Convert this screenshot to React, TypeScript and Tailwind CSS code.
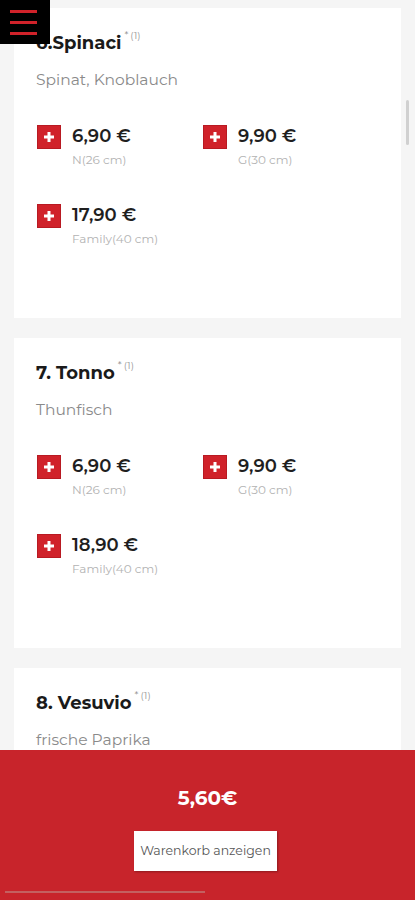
import React from "react";

const font = { fontFamily: '"Montserrat", "Inter", "Open Sans", sans-serif' };

type Price = { value: string; label: string };
type Item = { title: string; desc: string; prices: Price[] };

const items: Item[] = [
  {
    title: "6.Spinaci",
    desc: "Spinat, Knoblauch",
    prices: [
      { value: "6,90 €", label: "N(26 cm)" },
      { value: "9,90 €", label: "G(30 cm)" },
      { value: "17,90 €", label: "Family(40 cm)" },
    ],
  },
  {
    title: "7. Tonno",
    desc: "Thunfisch",
    prices: [
      { value: "6,90 €", label: "N(26 cm)" },
      { value: "9,90 €", label: "G(30 cm)" },
      { value: "18,90 €", label: "Family(40 cm)" },
    ],
  },
  {
    title: "8. Vesuvio",
    desc: "frische Paprika",
    prices: [
      { value: "6,90 €", label: "N(26 cm)" },
      { value: "9,90 €", label: "G(30 cm)" },
      { value: "18,90 €", label: "Family(40 cm)" },
    ],
  },
];

function PlusIcon() {
  return (
    <div className="w-6 h-6 bg-[#d0222a] flex items-center justify-center shrink-0 border border-[#b81a22]">
      <svg width="12" height="12" viewBox="0 0 12 12">
        <rect x="4.5" y="1" width="3" height="10" fill="#fff" />
        <rect x="1" y="4.5" width="10" height="3" fill="#fff" />
      </svg>
    </div>
  );
}

function Card({ item }: { item: Item }) {
  return (
    <div className="bg-white h-[310px] shrink-0 pl-[22px] pt-[23px]">
      <div className="flex items-start h-6">
        <span className="text-[18px] leading-6 font-bold text-[#1a1a1a]">{item.title}</span>
        <span className="text-[10px] leading-none text-[#888] ml-[3px] -mt-[1px]">*</span>
        <span className="text-[10px] leading-none text-[#999] ml-[2px] mt-0">(1)</span>
      </div>
      <div className="mt-[15px] text-[15.5px] leading-5 text-[#8a8a8a]">{item.desc}</div>
      <div className="mt-[35px] grid grid-cols-[166px_166px] gap-y-[55px]">
        {item.prices.map((p, i) => (
          <div key={i} className="flex items-start h-6 pl-px">
            <PlusIcon />
            <div className="ml-[11px] -mt-[1px]">
              <div className="text-[18px] leading-6 font-semibold text-[#1f1f1f] whitespace-nowrap">{p.value}</div>
              <div className="mt-[4px] text-[12px] leading-4 text-[#b3b3b3] whitespace-nowrap">{p.label}</div>
            </div>
          </div>
        ))}
      </div>
    </div>
  );
}

export default function App() {
  return (
    <div className="relative w-[415px] h-[900px] overflow-hidden bg-[#f5f5f5]" style={font}>
      <div className="flex flex-col gap-5 pt-2 pl-[14px] pr-[14px]">
        {items.map((it, i) => (
          <Card key={i} item={it} />
        ))}
      </div>

      {/* vertical scrollbar */}
      <div className="absolute left-[406px] top-[100px] w-[3px] h-[45px] bg-[#d0d0d0] rounded-full" />

      {/* hamburger */}
      <div className="absolute left-0 top-0 w-[50px] h-11 bg-black flex flex-col justify-center gap-[8px] pl-[10px]">
        <div className="w-[27px] h-[3px] bg-[#d0222a]" />
        <div className="w-[27px] h-[3px] bg-[#d0222a]" />
        <div className="w-[27px] h-[3px] bg-[#d0222a]" />
      </div>

      {/* footer */}
      <div className="absolute left-0 bottom-0 w-full h-[150px] bg-[#c8242b] flex flex-col items-center">
        <div className="mt-[34px] text-[20px] leading-7 font-bold text-white">5,60€</div>
        <div className="mt-[19px] w-[143px] h-10 bg-white flex items-center justify-center text-[12.5px] text-[#555] shadow-[1px_1px_2px_rgba(0,0,0,0.3)] -translate-x-[2px]">
          Warenkorb anzeigen
        </div>
        <div className="absolute left-[5px] bottom-[7px] w-[200px] h-[2px] bg-[#c46060]" />
      </div>
    </div>
  );
}
